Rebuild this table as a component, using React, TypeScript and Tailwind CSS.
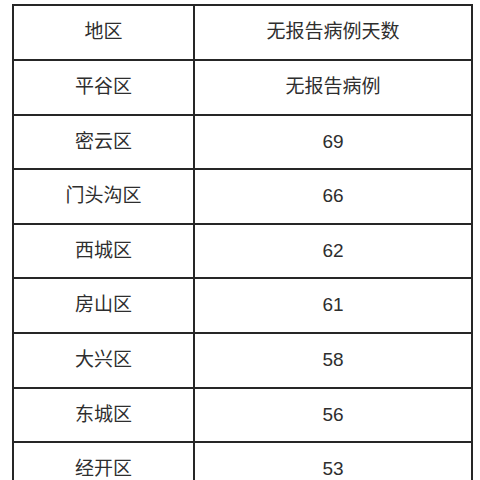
const rows: [string, string][] = [
  ['平谷区', '无报告病例'],
  ['密云区', '69'],
  ['门头沟区', '66'],
  ['西城区', '62'],
  ['房山区', '61'],
  ['大兴区', '58'],
  ['东城区', '56'],
  ['经开区', '53'],
]

const cell =
  'border-2 border-[#262626] text-center align-middle font-normal p-0'

export default function App() {
  return (
    <div
      className="w-[480px] h-[480px] overflow-hidden bg-white pt-[4px] pl-[12px]"
      style={{ fontFamily: '"Liberation Sans", "Noto Sans CJK SC", sans-serif' }}
    >
      <table className="table-fixed border-collapse w-[459px] text-[19px] text-[#2e2e2e]">
        <colgroup>
          <col className="w-[181px]" />
          <col className="w-[278px]" />
        </colgroup>
        <thead>
          <tr className="h-[55px]">
            <th className={cell}>地区</th>
            <th className={cell}>无报告病例天数</th>
          </tr>
        </thead>
        <tbody>
          {rows.map(([area, days]) => (
            <tr key={area} className="h-[54.6px]">
              <td className={cell}>{area}</td>
              <td className={cell}>{days}</td>
            </tr>
          ))}
        </tbody>
      </table>
    </div>
  )
}
